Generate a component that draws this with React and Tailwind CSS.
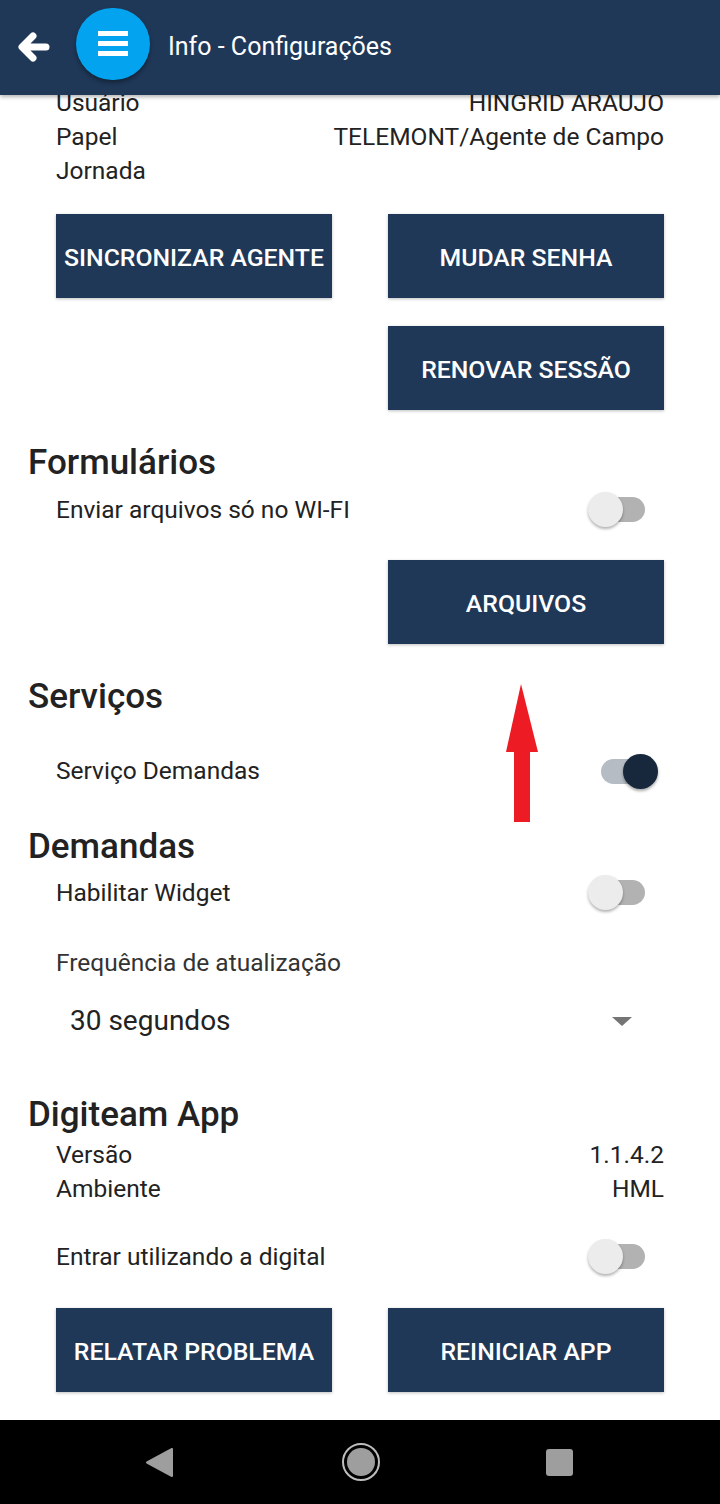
import React from 'react';

const font = { fontFamily: 'Roboto, "Noto Sans", Arial, sans-serif' };

function Toggle({ on }) {
  if (on) {
    return (
      <div className="relative w-[72px] h-[40px]">
        <div className="absolute left-[13px] top-[8px] w-[50px] h-[25px] rounded-full bg-[#b6bcc4]" />
        <div className="absolute left-[35px] top-[3px] w-[35px] h-[35px] rounded-full bg-[#17283d] shadow-[0_2px_3px_rgba(0,0,0,0.35)]" />
      </div>
    );
  }
  return (
    <div className="relative w-[72px] h-[40px]">
      <div className="absolute left-[6px] top-[7px] w-[51px] h-[25px] rounded-full bg-[#b2b2b2]" />
      <div className="absolute left-0 top-[2px] w-[35px] h-[35px] rounded-full bg-[#ececec] shadow-[0_2px_3px_rgba(0,0,0,0.3)]" />
    </div>
  );
}

function Btn({ children }) {
  return (
    <button className="w-[276px] h-[84px] pt-[3px] bg-[#1f3858] text-white text-[24.8px] font-medium uppercase shadow-[0_1px_3px_rgba(0,0,0,0.25)] whitespace-nowrap">
      {children}
    </button>
  );
}

function InfoRow({ label, value }) {
  return (
    <div className="h-[34px] flex items-center justify-between px-[56px] text-[24.5px] text-[#222]">
      <span>{label}</span>
      <span>{value}</span>
    </div>
  );
}

function SwitchRow({ label, on, className = '' }) {
  return (
    <div className={`h-[40px] flex items-center justify-between pl-[56px] pr-[60px] text-[24.5px] text-[#222] ${className}`}>
      <span>{label}</span>
      <Toggle on={on} />
    </div>
  );
}

function Heading({ children, className = '' }) {
  return (
    <h2 className={`h-[40px] flex items-center pl-[28px] text-[35px] font-medium text-[#222] ${className}`}>
      {children}
    </h2>
  );
}

export default function App() {
  return (
    <div className="relative w-[720px] h-[1504px] bg-white overflow-hidden" style={font}>
      {/* topo */}
      <header className="relative z-10 h-[95px] bg-[#1f3858] flex items-center shadow-[0_2px_4px_rgba(0,0,0,0.3)]">
        <svg className="ml-[16px] mb-[2px]" width="34" height="34" viewBox="0 0 34 34">
          <path d="M30 17 H8 M17 6 L6 17 L17 28" fill="none" stroke="white" strokeWidth="7" strokeLinecap="round" strokeLinejoin="round" />
        </svg>
        <div className="ml-[26px] mb-[8px] w-[74px] h-[72px] rounded-full bg-[#03a3ef] flex flex-col items-center justify-center gap-[5px] shadow-[0_3px_4px_rgba(0,0,0,0.35)]">
          <span className="block w-[30px] h-[5px] bg-white" />
          <span className="block w-[30px] h-[5px] bg-white" />
          <span className="block w-[30px] h-[5px] bg-white" />
        </div>
        <h1 className="ml-[18px] mb-[2px] text-white text-[25px]">Info - Configurações</h1>
      </header>

      <main className="-mt-[9px]">
        <InfoRow label="Usuário" value="HINGRID ARAUJO" />
        <InfoRow label="Papel" value="TELEMONT/Agente de Campo" />
        <InfoRow label="Jornada" value="" />

        <div className="mt-[26px] flex justify-between px-[56px]">
          <Btn>Sincronizar Agente</Btn>
          <Btn>Mudar Senha</Btn>
        </div>
        <div className="mt-[28px] flex justify-end px-[56px]">
          <Btn>Renovar Sessão</Btn>
        </div>

        <Heading className="mt-[33px]">Formulários</Heading>
        <SwitchRow label="Enviar arquivos só no WI-FI" className="mt-[7px]" />
        <div className="mt-[30px] flex justify-end px-[56px]">
          <Btn>Arquivos</Btn>
        </div>

        <Heading className="mt-[33px]">Serviços</Heading>
        <SwitchRow label="Serviço Demandas" on className="mt-[34px]" />

        <Heading className="mt-[36px]">Demandas</Heading>
        <SwitchRow label="Habilitar Widget" className="mt-[6px]" />
        <div className="mt-[33px] h-[34px] flex items-center pl-[56px] text-[24.5px] text-[#333]">
          Frequência de atualização
        </div>
        <div className="mt-[21px] h-[40px] flex items-center justify-between pl-[70px] pr-[88px] text-[28px] text-[#222]">
          <span>30 segundos</span>
          <svg width="20" height="9" viewBox="0 0 20 9">
            <path d="M0 0 H20 L10 9 Z" fill="#757575" />
          </svg>
        </div>

        <Heading className="mt-[54px]">Digiteam App</Heading>
        <div className="mt-[3px]">
          <InfoRow label="Versão" value="1.1.4.2" />
          <InfoRow label="Ambiente" value="HML" />
        </div>
        <SwitchRow label="Entrar utilizando a digital" className="mt-[31px]" />
        <div className="mt-[31px] flex justify-between px-[56px]">
          <Btn>Relatar Problema</Btn>
          <Btn>Reiniciar App</Btn>
        </div>
      </main>

      {/* barra de navegação */}
      <nav className="absolute bottom-0 left-0 right-0 h-[84px] bg-black flex items-center">
        <svg className="ml-[146px]" width="27" height="29" viewBox="0 0 27 29">
          <path d="M26 1 V28 L1 14.5 Z" fill="#9e9e9e" stroke="#9e9e9e" strokeWidth="2" strokeLinejoin="round" />
        </svg>
        <svg className="ml-[168px]" width="40" height="40" viewBox="0 0 40 40">
          <circle cx="20" cy="20" r="18" fill="none" stroke="#bdbdbd" strokeWidth="2" />
          <circle cx="20" cy="20" r="14" fill="#9e9e9e" />
        </svg>
        <div className="ml-[165px] w-[27px] h-[27px] rounded-[3px] bg-[#9e9e9e]" />
      </nav>

      {/* seta vermelha */}
      <svg className="absolute left-[500px] top-[680px]" width="44" height="146" viewBox="0 0 44 146">
        <path d="M21 4 L38 72 H30 V142 H14 V72 H6 Z" fill="#ed1c24" />
      </svg>
    </div>
  );
}
